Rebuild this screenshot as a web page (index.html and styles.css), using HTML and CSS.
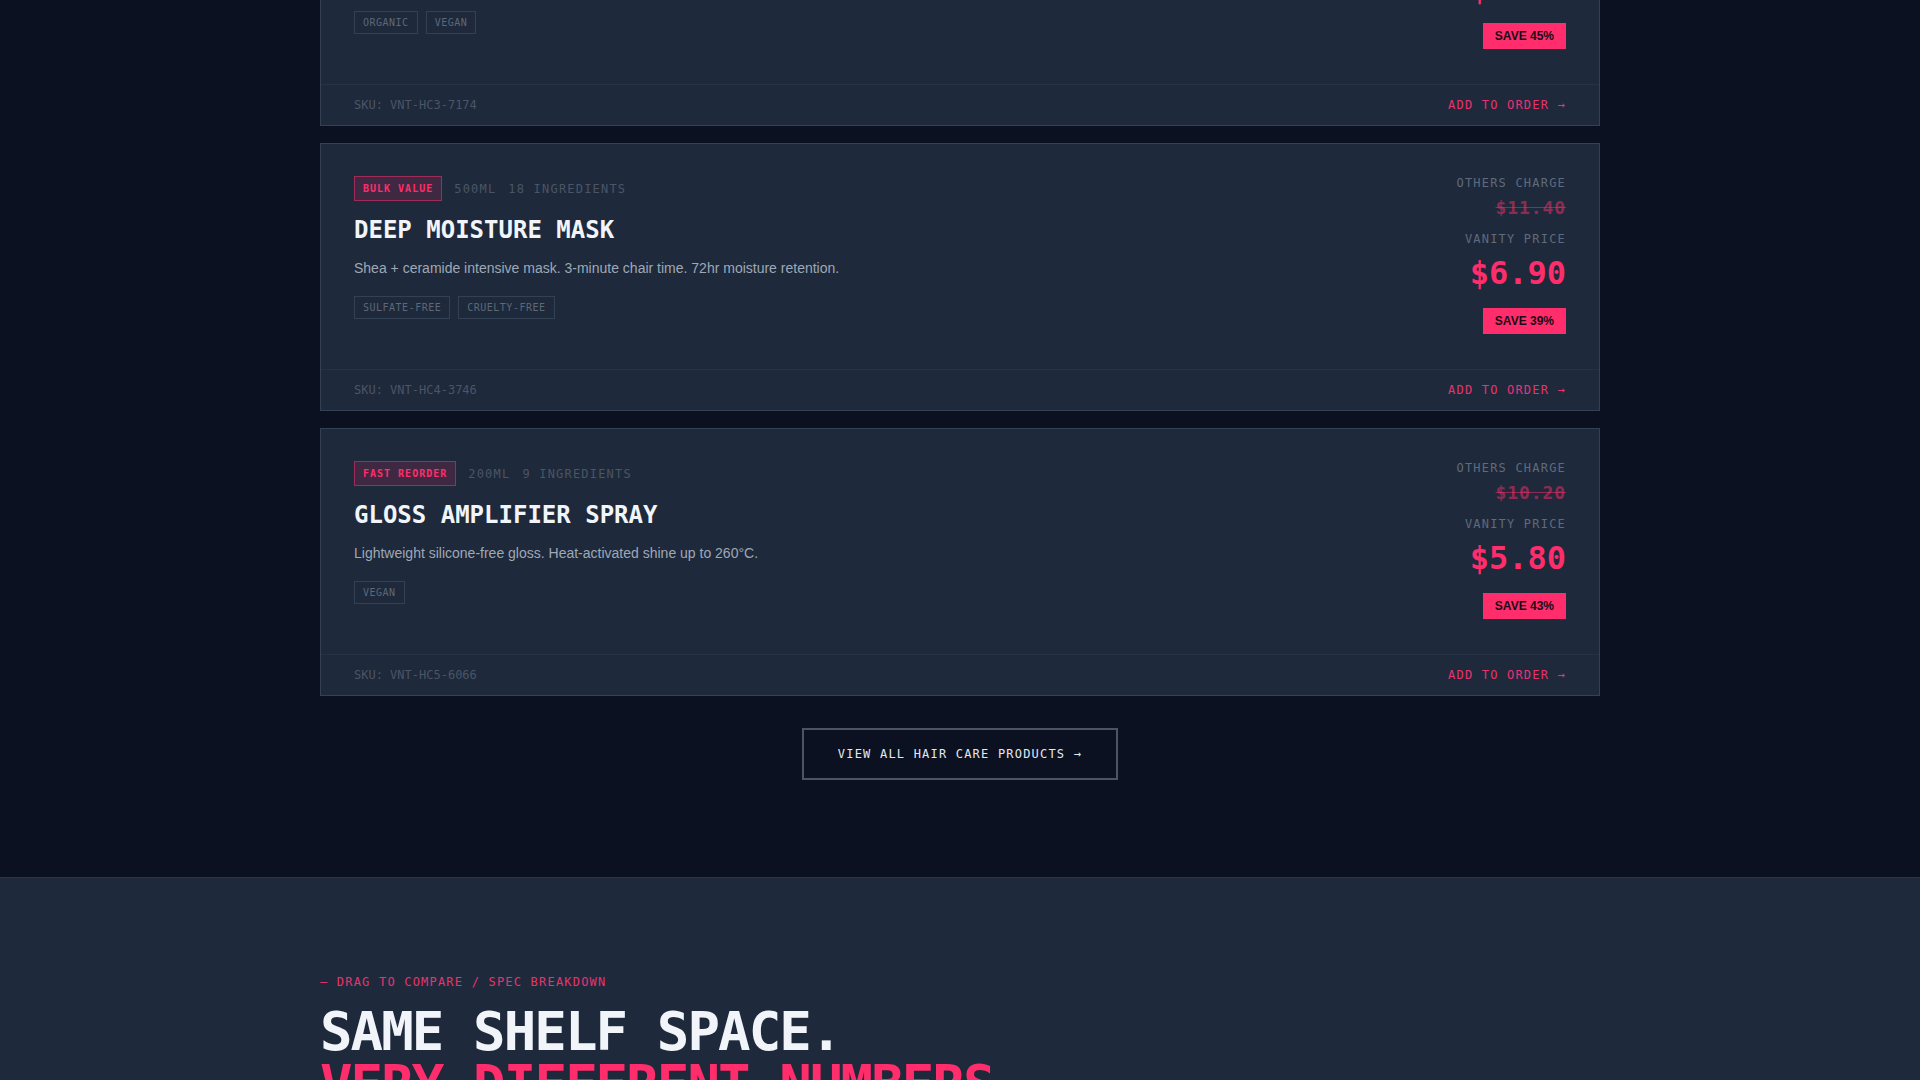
FILE: index.html
```html
<!DOCTYPE html>
<html lang="en">
<head>
    <meta charset="UTF-8">
    <meta name="viewport" content="width=device-width, initial-scale=1.0">
    <title>Vanity - Hair Care</title>
    <link rel="stylesheet" href="styles.css">
</head>
<body>
    <section class="products">
        <div class="container">
            <div class="product-list">
                <div class="product">
                    <div class="product-body">
                        <div class="product-info">
                            <div class="product-meta">
                                <span class="badge">Best Seller</span>
                                <span class="meta">250ML</span>
                                <span class="meta">12 Ingredients</span>
                            </div>
                            <h3 class="product-name">Hydrating Shampoo</h3>
                            <p class="product-desc">Argan + keratin daily wash. Salon-grade cleanse, half the price.</p>
                            <div class="tags">
                                <span class="tag">Organic</span>
                                <span class="tag">Vegan</span>
                            </div>
                        </div>
                        <div class="product-price">
                            <span class="price-label">Others charge</span>
                            <span class="price-old">$14.50</span>
                            <span class="price-label vanity">Vanity price</span>
                            <span class="price-now">$7.90</span>
                            <span class="save">SAVE 45%</span>
                        </div>
                    </div>
                    <div class="product-footer">
                        <span class="sku">SKU: VNT-HC3-7174</span>
                        <a class="add-order" href="#">Add to order &rarr;</a>
                    </div>
                </div>

                <div class="product">
                    <div class="product-body">
                        <div class="product-info">
                            <div class="product-meta">
                                <span class="badge">Bulk Value</span>
                                <span class="meta">500ML</span>
                                <span class="meta">18 Ingredients</span>
                            </div>
                            <h3 class="product-name">Deep Moisture Mask</h3>
                            <p class="product-desc">Shea + ceramide intensive mask. 3-minute chair time. 72hr moisture retention.</p>
                            <div class="tags">
                                <span class="tag">Sulfate-free</span>
                                <span class="tag">Cruelty-free</span>
                            </div>
                        </div>
                        <div class="product-price">
                            <span class="price-label">Others charge</span>
                            <span class="price-old">$11.40</span>
                            <span class="price-label vanity">Vanity price</span>
                            <span class="price-now">$6.90</span>
                            <span class="save">SAVE 39%</span>
                        </div>
                    </div>
                    <div class="product-footer">
                        <span class="sku">SKU: VNT-HC4-3746</span>
                        <a class="add-order" href="#">Add to order &rarr;</a>
                    </div>
                </div>

                <div class="product">
                    <div class="product-body">
                        <div class="product-info">
                            <div class="product-meta">
                                <span class="badge">Fast Reorder</span>
                                <span class="meta">200ML</span>
                                <span class="meta">9 Ingredients</span>
                            </div>
                            <h3 class="product-name">Gloss Amplifier Spray</h3>
                            <p class="product-desc">Lightweight silicone-free gloss. Heat-activated shine up to 260°C.</p>
                            <div class="tags">
                                <span class="tag">Vegan</span>
                            </div>
                        </div>
                        <div class="product-price">
                            <span class="price-label">Others charge</span>
                            <span class="price-old">$10.20</span>
                            <span class="price-label vanity">Vanity price</span>
                            <span class="price-now">$5.80</span>
                            <span class="save">SAVE 43%</span>
                        </div>
                    </div>
                    <div class="product-footer">
                        <span class="sku">SKU: VNT-HC5-6066</span>
                        <a class="add-order" href="#">Add to order &rarr;</a>
                    </div>
                </div>
            </div>

            <div class="view-all">
                <a class="btn-outline" href="#">View all hair care products &rarr;</a>
            </div>
        </div>
    </section>

    <section class="compare">
        <div class="container">
            <div class="eyebrow">&mdash; Drag to compare / spec breakdown</div>
            <h2 class="compare-title">Same shelf space.<br><span class="accent">Very different numbers.</span></h2>
        </div>
    </section>
</body>
</html>
```

FILE: styles.css
```css
body {
    margin: 0;
    background-color: #0b1120;
    color: #e2e8f0;
    font-family: "DejaVu Sans Mono", monospace;
}
.container {
    width: 1280px;
    margin: 0 auto;
}
.products {
    padding-bottom: 97px;
}

/* page is shown scrolled, first card starts above the fold */
.product-list {
    display: flex;
    flex-direction: column;
    gap: 17px;
    margin-top: -142px;
}
.product {
    background-color: #1e293b;
    border: 1px solid #334155;
}
.product-body {
    display: flex;
    justify-content: space-between;
    padding: 32px 33px 35px;
}
.product-meta {
    display: flex;
    align-items: center;
    gap: 12px;
}
.badge {
    font-size: 10px;
    line-height: 15px;
    font-weight: bold;
    letter-spacing: 1px;
    text-transform: uppercase;
    color: #ff2d6b;
    background-color: rgba(255, 45, 107, 0.15);
    border: 1px solid rgba(255, 45, 107, 0.5);
    padding: 4px 8px;
}
.meta {
    font-size: 12px;
    letter-spacing: 0.1em;
    text-transform: uppercase;
    color: #4b5565;
}
.product-name {
    margin: 15px 0 0;
    font-size: 24px;
    line-height: 1.2;
    font-weight: bold;
    text-transform: uppercase;
    color: #f1f5f9;
}
.product-desc {
    margin: 11px 0 0;
    font-family: "Liberation Sans", Arial, sans-serif;
    font-size: 14px;
    line-height: 24px;
    color: #9ea8b6;
}
.tags {
    display: flex;
    gap: 8px;
    margin-top: 16px;
}
.tag {
    font-size: 10px;
    line-height: 13px;
    letter-spacing: 0.05em;
    text-transform: uppercase;
    color: #5d6878;
    border: 1px solid #334155;
    padding: 4px 8px;
}
.product-price {
    display: flex;
    flex-direction: column;
    align-items: flex-end;
    text-align: right;
}
.price-label {
    font-size: 12px;
    line-height: 14px;
    letter-spacing: 0.1em;
    text-transform: uppercase;
    color: #5f6b7c;
}
.price-label.vanity {
    margin-top: 12px;
}
.price-old {
    margin-top: 6px;
    font-size: 18px;
    line-height: 24px;
    font-weight: bold;
    letter-spacing: 0.05em;
    color: rgba(255, 45, 107, 0.5);
    text-decoration: line-through;
}
.price-now {
    margin-top: 8px;
    font-size: 32px;
    line-height: 38px;
    font-weight: bold;
    color: #ff2d6b;
}
.save {
    margin-top: 16px;
    font-family: "Liberation Sans", Arial, sans-serif;
    font-size: 12px;
    line-height: 14px;
    font-weight: bold;
    color: #1a0b16;
    background-color: #ff2d6b;
    padding: 6px 12px;
}
.product-footer {
    display: flex;
    justify-content: space-between;
    align-items: center;
    padding: 12px 33px;
    border-top: 1px solid #273246;
    font-size: 12px;
    line-height: 16px;
}
.sku {
    color: #4b5565;
}
.add-order {
    color: #e8336f;
    text-decoration: none;
    letter-spacing: 0.1em;
    text-transform: uppercase;
}
.view-all {
    display: flex;
    justify-content: center;
    margin-top: 32px;
}
.btn-outline {
    display: inline-block;
    padding: 17px 34px;
    border: 2px solid #4a5466;
    color: #e2e8f0;
    text-decoration: none;
    font-size: 12px;
    line-height: 14px;
    letter-spacing: 0.1em;
    text-transform: uppercase;
}

.compare {
    background-color: #1e293b;
    border-top: 1px solid #2a3648;
    padding: 96px 0 80px;
}
.eyebrow {
    font-size: 12px;
    line-height: 16px;
    letter-spacing: 0.1em;
    text-transform: uppercase;
    color: #e8336f;
}
.compare-title {
    margin: 15px 0 0;
    font-size: 54px;
    line-height: 53px;
    font-weight: bold;
    letter-spacing: -0.035em;
    text-transform: uppercase;
    color: #f1f5f9;
}
.accent {
    color: #ff2d6b;
}
```
